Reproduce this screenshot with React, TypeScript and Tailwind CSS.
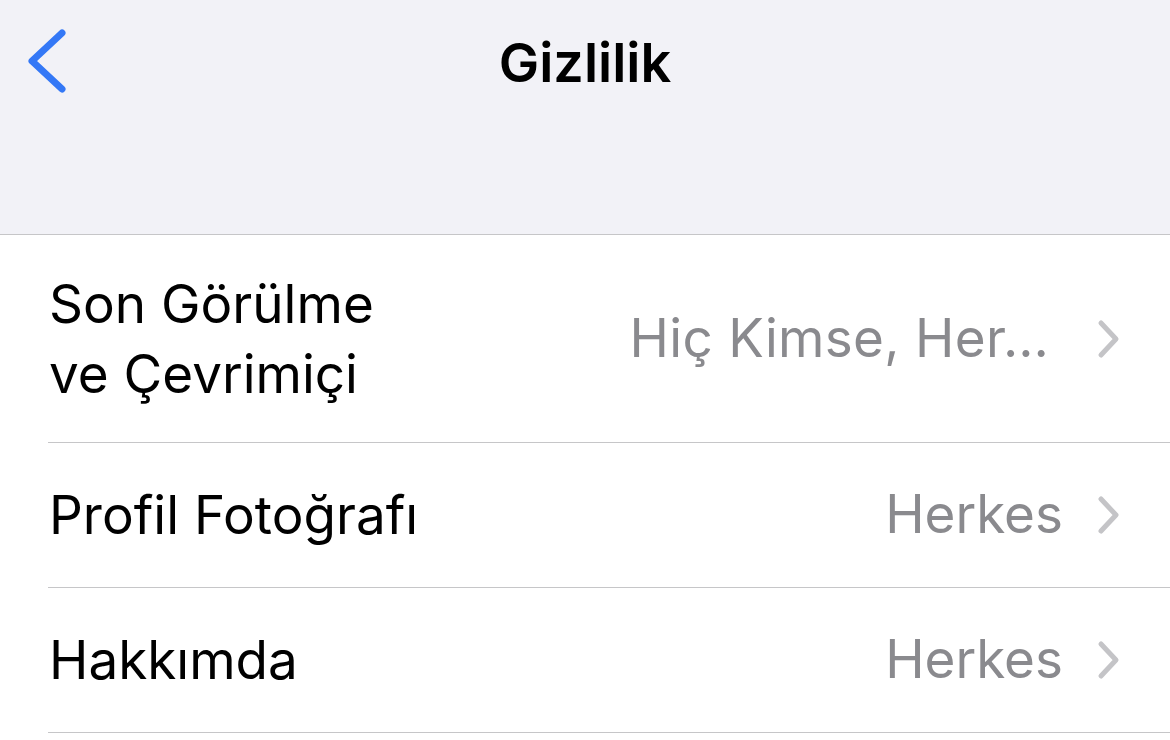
import React from "react";

function Chevron() {
  return (
    <svg width="24" height="40" viewBox="0 0 24 40" className="shrink-0">
      <path d="M4 4 L19 20 L4 36" fill="none" stroke="#c4c4c7" strokeWidth="5" strokeLinecap="round" strokeLinejoin="round" />
    </svg>
  );
}

function Row({ label, value, tall }: { label: React.ReactNode; value: string; tall?: boolean }) {
  return (
    <div className="pl-[48px] bg-white">
      <div className={`flex items-center justify-between border-b border-[#c6c6c8] pr-[49px] ${tall ? "h-[208px]" : "h-[145px]"}`}>
        <div className="text-[53px] leading-[70px] text-black pl-[1px]">{label}</div>
        <div className="flex items-center gap-[34px]">
          <span className={`text-[53px] text-[#8a8a8e] ${tall ? "mr-[14px] tracking-[0.3px]" : ""}`}>{value}</span>
          <Chevron />
        </div>
      </div>
    </div>
  );
}

export default function App() {
  return (
    <div className="w-[1170px] h-[740px] bg-white overflow-hidden" style={{ fontFamily: "Inter, 'Noto Sans', sans-serif" }}>
      <div className="h-[235px] bg-[#f2f2f7] border-b border-[#c6c6c8] relative">
        <div className="h-[124px] flex items-center justify-center">
          <span className="text-[54px] font-semibold text-black">Gizlilik</span>
        </div>
        <svg width="50" height="72" viewBox="0 0 50 72" className="absolute left-[22px] top-[25px]">
          <path d="M40 8 L10 36 L40 64" fill="none" stroke="#3478f6" strokeWidth="7" strokeLinecap="round" strokeLinejoin="round" />
        </svg>
      </div>
      <Row tall label={<>Son Görülme<br />ve Çevrimiçi</>} value="Hiç Kimse, Her…" />
      <Row label="Profil Fotoğrafı" value="Herkes" />
      <Row label="Hakkımda" value="Herkes" />
    </div>
  );
}
